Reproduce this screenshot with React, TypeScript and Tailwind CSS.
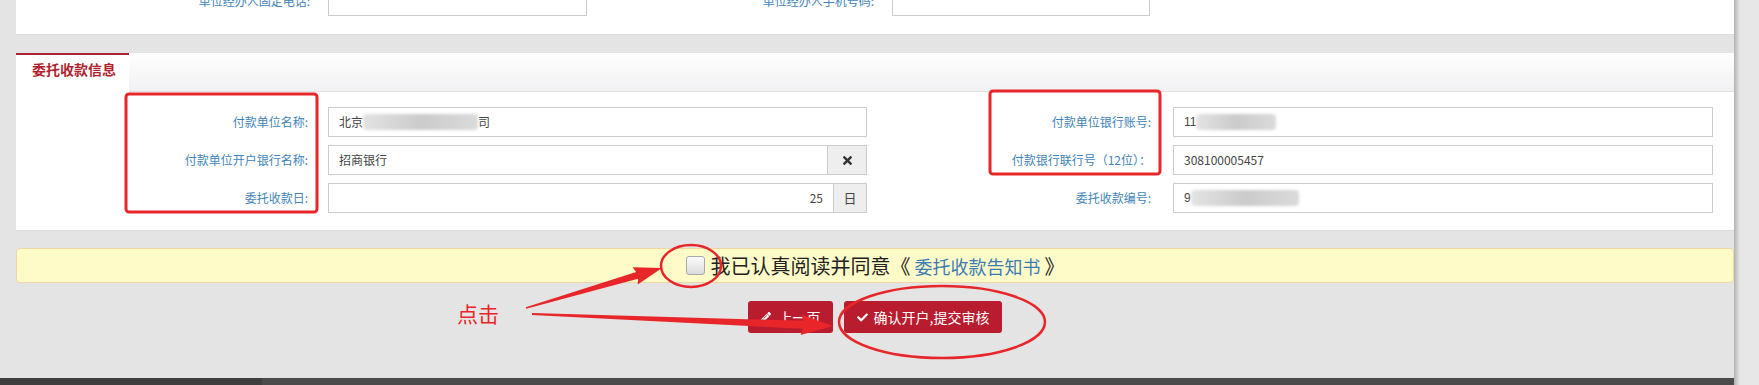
import { FaCheck, FaPencilAlt, FaTimes } from "react-icons/fa";

const labelCls =
  "shrink-0 text-right text-[12px] leading-[16px] text-[#3f84b8] font-['Noto_Sans_CJK_SC',sans-serif]";
const inputCls =
  "flex h-[30px] shrink-0 items-center border border-[#cccccc] bg-white px-[10px] text-[12px] text-[#444] font-['Noto_Sans_CJK_SC',sans-serif]";

function Blur({ w }: { w: number }) {
  // blurred (masked) value, width is per field
  return (
    <span
      className="inline-block h-[16px] rounded-[4px] bg-linear-to-r from-[#e3e3e3] via-[#cbcbcb] to-[#dadada] blur-[1.5px]"
      style={{ width: w }}
    />
  );
}

export default function App() {
  return (
    <div className="relative flex h-[385px] w-full overflow-hidden bg-[#e4e4e4] font-['Liberation_Sans','Noto_Sans_CJK_SC',sans-serif]">
      <div className="flex h-full w-[1734px] shrink-0 flex-col">
        {/* previous panel, scrolled mostly out of view */}
        <div className="ml-[16px] h-[35px] shrink-0 overflow-hidden border-b border-[#dcdcdc] bg-white">
          <div className="-mt-[14px] flex items-center">
            <div className={labelCls + " w-[294px]"}>单位经办人固定电话:</div>
            <div className={inputCls + " ml-[18px] w-[259px]"} />
            <div className={labelCls + " w-[287px]"}>单位经办人手机号码:</div>
            <div className={inputCls + " ml-[18px] w-[258px]"} />
          </div>
        </div>

        {/* 委托收款信息 */}
        <div className="ml-[16px] mt-[18px] h-[178px] shrink-0 border-b border-[#dadada] bg-white">
          <div className="flex h-[39px]">
            <div className="w-[113px] border-t-2 border-[#a82230] bg-white pl-[16px] pt-[4px] text-[14px] font-bold leading-[20px] text-[#b01f2d] font-['Noto_Sans_CJK_SC',sans-serif]">
              委托收款信息
            </div>
            <div className="flex-1 border-b border-[#e1e1e1] bg-linear-to-b from-white to-[#f1f1f3]" />
          </div>

          <div className="flex flex-col gap-[8px] pt-[15px]">
            <div className="flex items-center">
              <div className={labelCls + " w-[292px]"}>付款单位名称:</div>
              <div className={inputCls + " ml-[20px] w-[539px] gap-0"}>
                <span>北京</span>
                <Blur w={115} />
                <span>司</span>
              </div>
              <div className={labelCls + " w-[284px]"}>付款单位银行账号:</div>
              <div className={inputCls + " ml-[22px] w-[540px]"}>
                <span className="font-['Liberation_Sans',sans-serif]">11</span>
                <Blur w={80} />
              </div>
            </div>

            <div className="flex items-center">
              <div className={labelCls + " w-[292px]"}>付款单位开户银行名称:</div>
              <div className="ml-[20px] flex h-[30px] w-[539px] shrink-0">
                <div className={inputCls + " flex-1"}>招商银行</div>
                <div className="flex w-[39px] items-center justify-center border border-l-0 border-[#cccccc] bg-[#eeeeee] text-[#333]">
                  <FaTimes size={13} />
                </div>
              </div>
              <div className={labelCls + " w-[284px]"}>付款银行联行号（12位）：</div>
              <div className={inputCls + " ml-[22px] w-[540px] font-['Liberation_Sans',sans-serif]"}>
                308100005457
              </div>
            </div>

            <div className="flex items-center">
              <div className={labelCls + " w-[292px]"}>委托收款日:</div>
              <div className="ml-[20px] flex h-[30px] w-[539px] shrink-0">
                <div className={inputCls + " flex-1 justify-end font-['Liberation_Sans',sans-serif]"}>25</div>
                <div className="flex w-[33px] items-center justify-center border border-l-0 border-[#cccccc] bg-[#eeeeee] text-[13px] text-[#444] font-['Noto_Sans_CJK_SC',sans-serif]">
                  日
                </div>
              </div>
              <div className={labelCls + " w-[284px]"}>委托收款编号:</div>
              <div className={inputCls + " ml-[22px] w-[540px] bg-[#ebebeb]"}>
                <span className="font-['Liberation_Sans',sans-serif]">9</span>
                <Blur w={108} />
              </div>
            </div>
          </div>
        </div>

        {/* agreement */}
        <div className="ml-[16px] mt-[17px] flex h-[35px] shrink-0 items-center justify-center rounded-[4px] border border-[#efd7a4] bg-[#fffbc8]">
          <div className="flex items-center">
            <span className="mr-[6px] h-[19px] w-[19px] rounded-[3px] border border-[#a8a8a8] bg-linear-to-b from-[#fbfbfb] to-[#dcdcdc]" />
            <span className="text-[20px] leading-[24px] text-[#222] font-['Noto_Sans_CJK_SC',sans-serif]">
              我已认真阅读并同意《
            </span>
            <span className="ml-[4px] text-[18px] leading-[24px] text-[#3c7cb6] font-['Noto_Sans_CJK_SC',sans-serif]">
              委托收款告知书
            </span>
            <span className="ml-[4px] text-[20px] leading-[24px] text-[#222] font-['Noto_Sans_CJK_SC',sans-serif]">
              》
            </span>
          </div>
        </div>

        {/* buttons */}
        <div className="ml-[16px] mt-[18px] flex shrink-0 justify-center gap-[11px]">
          <button className="flex h-[32px] w-[85px] items-center justify-center gap-[8px] rounded-[3px] bg-[#b81c2e] text-[14px] text-white font-['Noto_Sans_CJK_SC',sans-serif]">
            <FaPencilAlt size={10} />
            上一页
          </button>
          <button className="flex h-[32px] w-[158px] items-center justify-center gap-[6px] rounded-[3px] bg-[#b81c2e] text-[14px] text-white font-['Noto_Sans_CJK_SC',sans-serif]">
            <FaCheck size={11} />
            确认开户,提交审核
          </button>
        </div>

        <div className="mt-auto flex h-[7px] shrink-0">
          <div className="w-[262px] bg-[#3f3f3f]" />
          <div className="flex-1 bg-[#4b4b4b]" />
        </div>
      </div>

      {/* scrollbar */}
      <div className="flex flex-1">
        <div className="w-[6px] bg-linear-to-r from-[#b3b3b3] to-[#e6e6e6]" />
        <div className="flex-1 bg-[#e7e7e7]" />
      </div>

      {/* annotations drawn over the screenshot */}
      <svg
        className="pointer-events-none absolute left-0 top-0"
        width="1759"
        height="385"
        viewBox="0 0 1759 385"
      >
        <rect x="126" y="94" width="191" height="118" rx="3" fill="none" stroke="#e8262a" strokeWidth="3" />
        <rect x="990" y="91" width="170" height="83" rx="3" fill="none" stroke="#e8262a" strokeWidth="3" />
        <ellipse cx="691" cy="266" rx="30" ry="21" fill="none" stroke="#e8262a" strokeWidth="2.5" />
        <ellipse cx="942" cy="322" rx="103" ry="36" fill="none" stroke="#e8262a" strokeWidth="2.5" />
        <polygon
          fill="#e8262a"
          points="526.2,308.8 638.1,278.7 637.7,284.5 662,268 632.6,267.2 636.1,271.9 525.8,307.2"
        />
        <polygon
          fill="#e8262a"
          points="532,315 802.8,328.8 800.6,334.9 833,326 801.4,314.7 803.2,320.8 532,313"
        />
      </svg>
      <span className="pointer-events-none absolute left-[457px] top-[302px] text-[21px] leading-[22px] text-[#e8262a] font-['Noto_Sans_CJK_SC',sans-serif]">
        点击
      </span>
    </div>
  );
}
